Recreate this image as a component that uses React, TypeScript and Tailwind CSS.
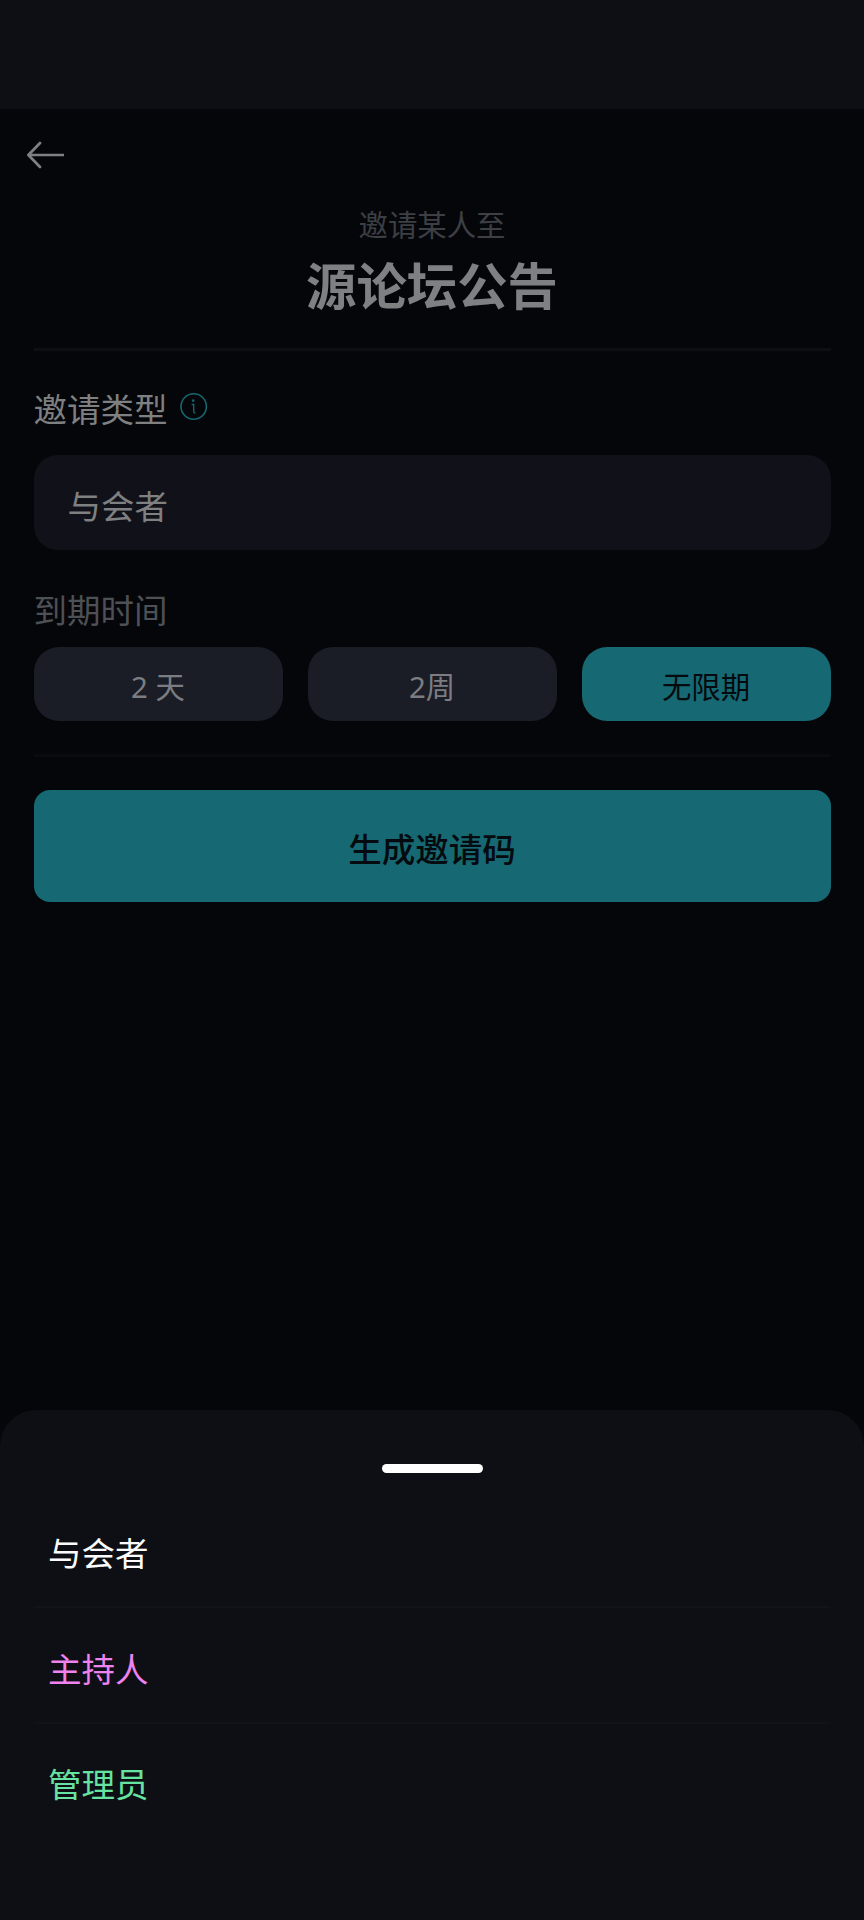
const periods = [
  { label: "2 天", active: false },
  { label: "2周", active: false },
  { label: "无限期", active: true },
];

const roles = [
  { label: "与会者", color: "text-[#fbfbfd]" },
  { label: "主持人", color: "text-[#ee82ee]" },
  { label: "管理员", color: "text-[#66e3a0]" },
];

function BackArrow() {
  return (
    <svg
      width="38"
      height="28"
      viewBox="0 0 38 28"
      fill="none"
      stroke="#7f8081"
      strokeWidth="2.7"
    >
      <path d="M37 14H2" />
      <path
        d="M13 2L1.4 14L13 26"
        strokeLinecap="round"
        strokeLinejoin="round"
      />
    </svg>
  );
}

function InfoIcon() {
  return (
    <svg width="28" height="28" viewBox="0 0 28 28" fill="none" stroke="#166870">
      <circle cx="13.7" cy="13.5" r="12.7" strokeWidth="1.6" />
      <circle cx="13.2" cy="7.6" r="1.3" fill="#166870" stroke="none" />
      <path d="M11.6 11.5H13.7V18.4Q13.7 20 15.4 20" strokeWidth="1.4" />
    </svg>
  );
}

export default function App() {
  return (
    <div className="flex h-[1920px] w-[864px] flex-col overflow-hidden bg-[#05060a] font-['Noto_Sans','Noto_Sans_CJK_SC',sans-serif] text-[33.5px] leading-[48px] text-[#7f8081]">
      <div className="h-[109px] shrink-0 bg-[#0e0f14]" />

      <header className="pt-[32px] pl-[27px]">
        <BackArrow />
      </header>

      <main className="flex grow flex-col px-[33.5px]">
        <div className="mt-[30px] text-center">
          <p className="text-[29.4px] leading-[52px] text-[#3c3f43]">
            邀请某人至
          </p>
          <h1 className="text-[50.4px] leading-[70px] font-bold">
            源论坛公告
          </h1>
        </div>

        <hr className="mt-[27px] h-[3px] border-0 bg-[#0e0f12]" />

        {/* invitation type */}
        <div className="mt-[34px] flex h-[48px] gap-[12px]">
          <span>邀请类型</span>
          <span className="mt-[8px]">
            <InfoIcon />
          </span>
        </div>
        <button className="mt-[22px] flex h-[95px] items-center rounded-[24px] bg-[#111219] px-[34px] pt-[6px]">
          与会者
        </button>

        {/* expiry */}
        <p className="mt-[36px] text-[#4d5054]">到期时间</p>
        <div className="mt-[13px] grid grid-cols-3 gap-[25px] text-[29.4px]">
          {periods.map((period) => (
            <button
              key={period.label}
              className={
                period.active
                  ? "h-[74px] rounded-[25px] bg-[#166872] pt-[5px] text-[#050a0e]"
                  : "h-[74px] rounded-[25px] bg-[#1b1d26] pt-[5px] text-[#7c7d82]"
              }
            >
              {period.label}
            </button>
          ))}
        </div>

        <hr className="mt-[33px] h-[3px] border-0 bg-[#090b0e]" />

        <button className="mt-[33px] h-[112px] rounded-[16px] bg-[#166872] pt-[6px] font-medium text-[#050a0e]">
          生成邀请码
        </button>
      </main>

      {/* bottom sheet */}
      <section className="h-[510px] shrink-0 rounded-t-[36px] bg-[#0e0f14] px-[34px] pt-[54px]">
        <div className="mx-auto h-[9px] w-[101px] rounded-full bg-white" />
        <ul className="mt-[19px] divide-y-2 divide-[#111318]">
          {roles.map((role) => (
            <li
              key={role.label}
              className={`flex h-[116px] items-center px-[14px] pt-[8px] last:h-[111px] ${role.color}`}
            >
              {role.label}
            </li>
          ))}
        </ul>
      </section>
    </div>
  );
}
